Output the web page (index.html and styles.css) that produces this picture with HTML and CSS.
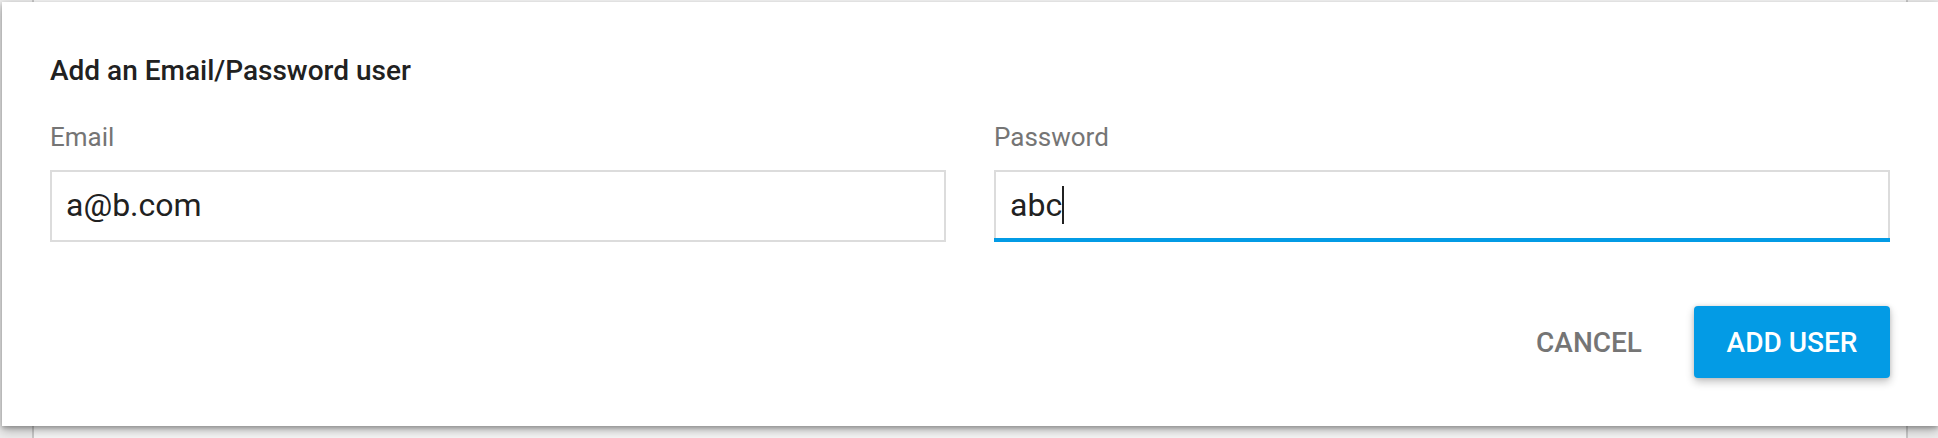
FILE: index.html
```html
<!DOCTYPE html>
<html lang="en">
<head>
<meta charset="utf-8">
<title>Add user</title>
<link rel="stylesheet" href="styles.css">
</head>
<body>
<div class="page">
  <form class="card">
    <h1 class="title">Add an Email/Password user</h1>
    <div class="fields">
      <div class="field">
        <label class="label" for="email">Email</label>
        <div class="control">
          <input class="input" id="email" type="text" value="a@b.com">
        </div>
      </div>
      <div class="field">
        <label class="label" for="password">Password</label>
        <div class="control control-active">
          <input class="input" id="password" type="text" value="abc">
          <span class="caret"></span>
        </div>
      </div>
    </div>
    <div class="actions">
      <button class="button" type="button">CANCEL</button>
      <button class="button button-primary" type="submit">ADD USER</button>
    </div>
  </form>
</div>
</body>
</html>
```
FILE: styles.css
```css
* {
  box-sizing: border-box;
}

body {
  margin: 0;
  overflow: hidden;
  background: #ececec;
  color: #212121;
  font-family: Roboto, "Liberation Sans", sans-serif;
}

.page {
  min-height: 100vh;
  padding: 2px 0 12px 2px;
  background: linear-gradient(to right, transparent 32px, #c8c8c8 32px, #c8c8c8 34px, #f6f6f6 34px, #f6f6f6 calc(100% - 32px), #c8c8c8 calc(100% - 32px), #c8c8c8 calc(100% - 30px), transparent calc(100% - 30px));
}

.card {
  padding: 48px;
  background: #fff;
  box-shadow: 0 4px 10px rgba(0, 0, 0, 0.3), 0 2px 4px rgba(0, 0, 0, 0.22);
}

.title {
  margin: 0;
  font-size: 28px;
  font-weight: 500;
  line-height: 42px;
}

.fields {
  display: grid;
  grid-template-columns: 1fr 1fr;
  gap: 48px;
  margin-top: 26px;
}

.label {
  display: block;
  margin-bottom: 14px;
  color: #757575;
  font-size: 26px;
  line-height: 38px;
}

.control {
  position: relative;
}

.input {
  display: block;
  width: 100%;
  height: 72px;
  padding: 0 14px 2px;
  border: 2px solid #dcdcdc;
  border-radius: 0;
  outline: none;
  background: #fff;
  color: #212121;
  font-family: inherit;
  font-size: 32px;
}

.control-active::after {
  content: "";
  position: absolute;
  right: 0;
  bottom: 0;
  left: 0;
  height: 4px;
  background: #039be5;
}

.caret {
  position: absolute;
  top: 16px;
  left: 68px;
  width: 2px;
  height: 38px;
  background: #212121;
}

.actions {
  display: flex;
  justify-content: flex-end;
  gap: 20px;
  margin-top: 64px;
}

.button {
  height: 72px;
  padding: 0 32px;
  border: 0;
  border-radius: 4px;
  background: transparent;
  color: #757575;
  font-family: inherit;
  font-size: 28px;
  font-weight: 500;
}

.button-primary {
  min-width: 196px;
  background: #039be5;
  color: #fff;
  box-shadow: 0 4px 8px rgba(0, 0, 0, 0.24), 0 0 4px rgba(0, 0, 0, 0.12);
}
```
